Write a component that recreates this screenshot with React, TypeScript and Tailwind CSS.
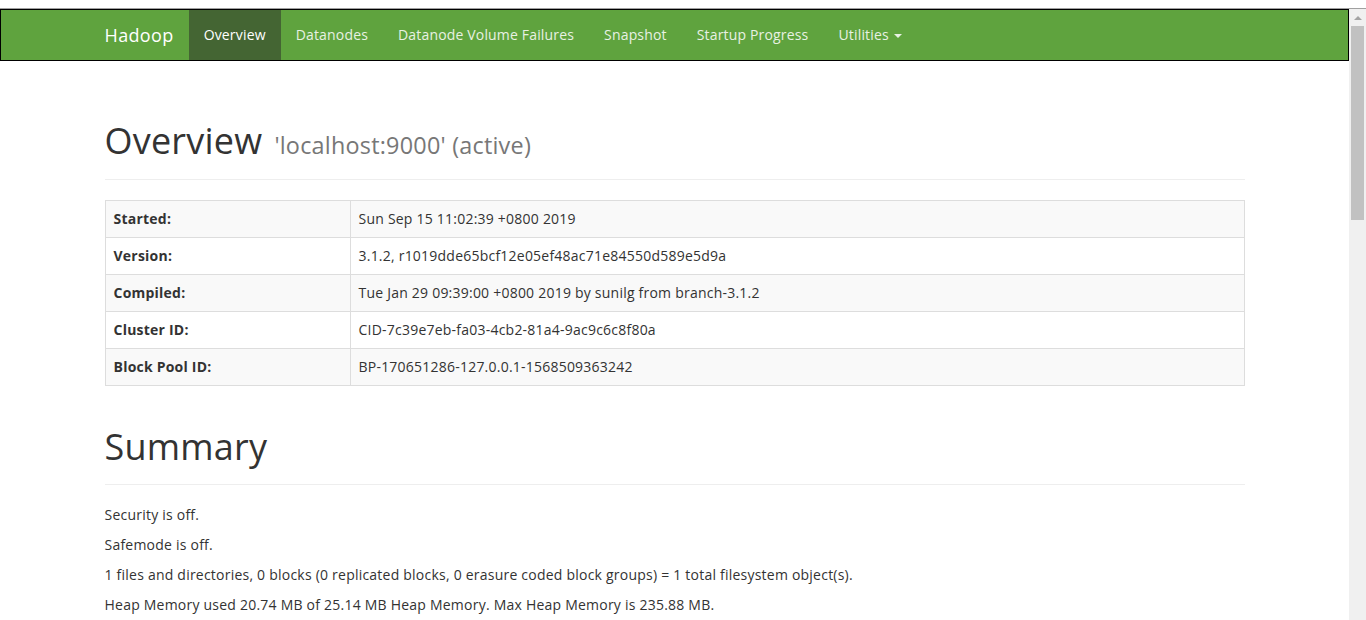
import React from 'react';

const navItems = ['Overview', 'Datanodes', 'Datanode Volume Failures', 'Snapshot', 'Startup Progress'];

const info = [
  ['Started:', 'Sun Sep 15 11:02:39 +0800 2019'],
  ['Version:', '3.1.2, r1019dde65bcf12e05ef48ac71e84550d589e5d9a'],
  ['Compiled:', 'Tue Jan 29 09:39:00 +0800 2019 by sunilg from branch-3.1.2'],
  ['Cluster ID:', 'CID-7c39e7eb-fa03-4cb2-81a4-9ac9c6c8f80a'],
  ['Block Pool ID:', 'BP-170651286-127.0.0.1-1568509363242'],
];

const summary = [
  'Security is off.',
  'Safemode is off.',
  '1 files and directories, 0 blocks (0 replicated blocks, 0 erasure coded block groups) = 1 total filesystem object(s).',
  'Heap Memory used 20.74 MB of 25.14 MB Heap Memory. Max Heap Memory is 235.88 MB.',
];

const Navbar = () => (
  <header className="h-[52px] border border-black bg-[#5fa33e]">
    <div className="mx-auto flex w-[1170px] px-[15px]">
      <a className="-ml-[15px] block h-[50px] px-[15px] py-[15px] text-[18px] leading-[20px] tracking-[0.02em] text-white">
        Hadoop
      </a>
      <ul className="flex tracking-[0.012em]">
        {navItems.map((item, i) => (
          <li key={item}>
            <a
              className={
                i === 0
                  ? 'block bg-[#446533] px-[15px] py-[15px] leading-[20px] text-white'
                  : 'block px-[15px] py-[15px] leading-[20px] text-[#e8f1e3]'
              }
            >
              {item}
            </a>
          </li>
        ))}
        <li>
          <a className="flex items-center px-[15px] py-[15px] leading-[20px] text-[#e8f1e3]">
            Utilities
            <span className="ml-[5px] mt-[1px] h-0 w-0 border-x-4 border-t-4 border-x-transparent border-t-[#e8f1e3]" />
          </a>
        </li>
      </ul>
    </div>
  </header>
);

const PageHeader = ({ title, sub, top }: { title: string; sub?: string; top: string }) => (
  <div className={`${top} mb-[20px] border-b border-[#eee] pb-[9px]`}>
    <h1 className="mb-[9px] pt-[1px] text-[36px] font-normal leading-[39.6px] text-[#333]">
      {title}
      {sub && <small className="ml-[12px] text-[23.4px] leading-none text-[#777]">{sub}</small>}
    </h1>
  </div>
);

const Scrollbar = () => (
  <div className="flex w-[17px] flex-col items-center bg-[#f0f0f0]">
    <div className="flex h-[17px] items-center justify-center">
      <span className="h-0 w-0 border-x-[4px] border-b-[4px] border-x-transparent border-b-[#a3a3a3]" />
    </div>
    <div className="h-[194px] w-[13px] bg-[#c1c1c1]" />
  </div>
);

export default function App() {
  return (
    <div
      className="flex h-[620px] flex-col overflow-hidden bg-white text-[14px] leading-[20px] tracking-[0.016em] text-[#333]"
      style={{ fontFamily: '"Open Sans", "Noto Sans", sans-serif' }}
    >
      <div className="h-[9px] border-b border-[#a0a0a0]" />
      <div className="flex min-h-0 flex-1">
        <div className="min-w-0 flex-1">
          <Navbar />
          <div className="mx-auto w-[1170px] px-[15px]">
            <PageHeader title="Overview" sub="'localhost:9000' (active)" top="mt-[59px]" />
            <table className="w-full border-collapse border border-[#ddd]">
              <tbody>
                {info.map(([k, v], i) => (
                  <tr key={k} className={i % 2 === 0 ? 'bg-[#f9f9f9]' : ''}>
                    <th className="w-[245px] border border-[#ddd] p-[8px] text-left font-bold">{k}</th>
                    <td className="border border-[#ddd] p-[8px]">{v}</td>
                  </tr>
                ))}
              </tbody>
            </table>
            <PageHeader title="Summary" top="mt-[40px]" />
            {summary.map((s) => (
              <p key={s} className="mb-[10px]">
                {s}
              </p>
            ))}
          </div>
        </div>
        <Scrollbar />
      </div>
    </div>
  );
}
